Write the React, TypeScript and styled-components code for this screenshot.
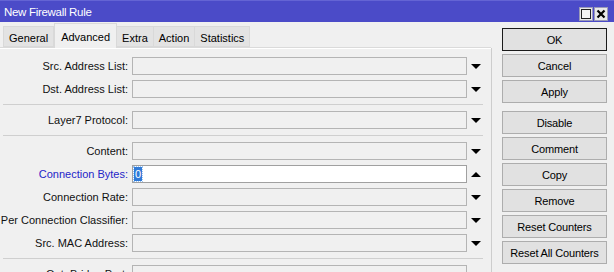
import React from 'react';
import styled, { createGlobalStyle } from 'styled-components';

const Global = createGlobalStyle`
  html, body { margin: 0; padding: 0; background: #f0f0f0; overflow: hidden; }
  body { font-family: "Liberation Sans", Arial, sans-serif; font-size: 11px; color: #000; }
  * { box-sizing: border-box; }
`;

const Window = styled.div`
  width: 614px;
  height: 272px;
  overflow: hidden;
  background: #f0f0f0;
  display: flex;
  flex-direction: column;
`;

const TitleBar = styled.div`
  height: 22px;
  flex: none;
  background: #4b4bc8;
  border-top: 1px solid #6464d4;
  display: flex;
  align-items: center;
  padding: 0 6px 0 4px;
  color: #fff;
`;

const Title = styled.span`
  flex: 1;
  font-size: 11.5px;
  letter-spacing: -0.3px;
`;

const WinButton = styled.div`
  width: 14px;
  height: 14px;
  margin-left: 1px;
  margin-top: 4px;
  background: #e8e8e8;
  border: 1px solid #9a9ab8;
  display: flex;
  align-items: center;
  justify-content: center;
`;

const MaxGlyph = styled.div`
  width: 10px;
  height: 10px;
  border: 1px solid #222;
  background: #f4f4f4;
`;

const Body = styled.div`
  display: flex;
  flex: 1;
  min-height: 0;
`;

const LeftPane = styled.div`
  width: 491px;
  flex: none;
  display: flex;
  flex-direction: column;
`;

const TabStrip = styled.div`
  height: 26px;
  flex: none;
  display: flex;
  align-items: flex-end;
  padding-left: 3px;
  border-bottom: 1px solid #dadada;
`;

const Tab = styled.div<{ $active?: boolean }>`
  height: ${(p) => (p.$active ? 25 : 21)}px;
  margin-bottom: ${(p) => (p.$active ? -1 : 0)}px;
  padding: ${(p) => (p.$active ? '2px 6px 0' : '3px 5px 0')};
  border: 1px solid #d9d9d9;
  border-bottom: ${(p) => (p.$active ? 'none' : '1px solid #d9d9d9')};
  margin-left: ${(p) => (p.$active ? 0 : -1)}px;
  background: ${(p) => (p.$active ? '#f0f0f0' : '#e3e3e3')};
  position: relative;
  z-index: ${(p) => (p.$active ? 1 : 0)};
  display: flex;
  align-items: center;
  font-size: 11px;
  line-height: 13px;
  white-space: nowrap;
  &:first-child { margin-left: 0; }
`;

const Panel = styled.div`
  flex: 1;
  padding-top: 8px;
  border-top: 1px solid #ffffff;
  display: flex;
  flex-direction: column;
`;

const Row = styled.div`
  display: flex;
  align-items: center;
  height: 18px;
  margin-bottom: 5px;
  flex: none;
`;

const Label = styled.div<{ $highlight?: boolean }>`
  width: 132px;
  padding-right: 4px;
  text-align: right;
  white-space: nowrap;
  color: ${(p) => (p.$highlight ? '#2424c8' : '#111')};
  font-size: 11px;
`;

const Field = styled.div<{ $active?: boolean }>`
  width: 335px;
  height: 18px;
  border: 1px solid ${(p) => (p.$active ? '#a0a0a0' : '#b4b4b4')};
  background: ${(p) => (p.$active ? '#ffffff' : '#f0f0f0')};
  display: flex;
  align-items: center;
  padding-left: 1px;
`;

const Selected = styled.span`
  background: #2f7ad8;
  color: #fff;
  font-size: 11px;
  line-height: 14px;
  padding: 0 1px;
  outline: 1px dotted #9cc4f0;
`;

const ArrowCell = styled.div`
  width: 18px;
  display: flex;
  justify-content: center;
  align-items: center;
`;

const Arrow = styled.div<{ $up?: boolean }>`
  width: 0;
  height: 0;
  border-left: 5px solid transparent;
  border-right: 5px solid transparent;
  ${(p) => (p.$up ? 'border-bottom: 5px solid #000;' : 'border-top: 5px solid #000;')}
`;

const Separator = styled.div`
  height: 1px;
  margin: 1px 8px 6px 3px;
  background: #cfcfcf;
  flex: none;
`;

const Divider = styled.div`
  width: 1px;
  margin-top: 26px;
  background: #cdcdcd;
  flex: none;
`;

const RightPane = styled.div`
  flex: 1;
  padding: 6px 0 0 10px;
  display: flex;
  flex-direction: column;
`;

const Button = styled.div<{ $default?: boolean; $gap?: boolean }>`
  width: 105px;
  height: 23px;
  flex: none;
  margin-bottom: 3px;
  margin-top: ${(p) => (p.$gap ? 5 : 0)}px;
  background: #e1e1e1;
  border: 1px solid ${(p) => (p.$default ? '#1a1a1a' : '#adadad')};
  display: flex;
  align-items: center;
  justify-content: center;
  font-size: 11px;
  letter-spacing: -0.15px;
  white-space: nowrap;
`;

type FieldRow = { label: string; highlight?: boolean; active?: boolean; value?: string; sepBefore?: boolean };

const rows: FieldRow[] = [
  { label: 'Src. Address List:' },
  { label: 'Dst. Address List:' },
  { label: 'Layer7 Protocol:', sepBefore: true },
  { label: 'Content:', sepBefore: true },
  { label: 'Connection Bytes:', highlight: true, active: true, value: '0' },
  { label: 'Connection Rate:' },
  { label: 'Per Connection Classifier:' },
  { label: 'Src. MAC Address:' },
  { label: 'Out. Bridge Port:', sepBefore: true },
];

const buttons: { text: string; def?: boolean; gap?: boolean }[] = [
  { text: 'OK', def: true },
  { text: 'Cancel' },
  { text: 'Apply' },
  { text: 'Disable', gap: true },
  { text: 'Comment' },
  { text: 'Copy' },
  { text: 'Remove' },
  { text: 'Reset Counters' },
  { text: 'Reset All Counters' },
];

const tabs = ['General', 'Advanced', 'Extra', 'Action', 'Statistics'];

export default function App() {
  return (
    <Window>
      <Global />
      <TitleBar>
        <Title>New Firewall Rule</Title>
        <WinButton>
          <MaxGlyph />
        </WinButton>
        <WinButton>
          <svg width="10" height="10" viewBox="0 0 10 10">
            <path d="M1.5 1.5 L8.5 8.5 M8.5 1.5 L1.5 8.5" stroke="#000" strokeWidth="2.2" />
          </svg>
        </WinButton>
      </TitleBar>
      <Body>
        <LeftPane>
          <TabStrip>
            {tabs.map((t) => (
              <Tab key={t} $active={t === 'Advanced'}>
                {t}
              </Tab>
            ))}
          </TabStrip>
          <Panel>
            {rows.map((r) => (
              <React.Fragment key={r.label}>
                {r.sepBefore && <Separator />}
                <Row>
                  <Label $highlight={r.highlight}>{r.label}</Label>
                  <Field $active={r.active}>{r.value && <Selected>{r.value}</Selected>}</Field>
                  <ArrowCell>
                    <Arrow $up={r.active} />
                  </ArrowCell>
                </Row>
              </React.Fragment>
            ))}
          </Panel>
        </LeftPane>
        <Divider />
        <RightPane>
          {buttons.map((b) => (
            <Button key={b.text} $default={b.def} $gap={b.gap}>
              {b.text}
            </Button>
          ))}
        </RightPane>
      </Body>
    </Window>
  );
}
